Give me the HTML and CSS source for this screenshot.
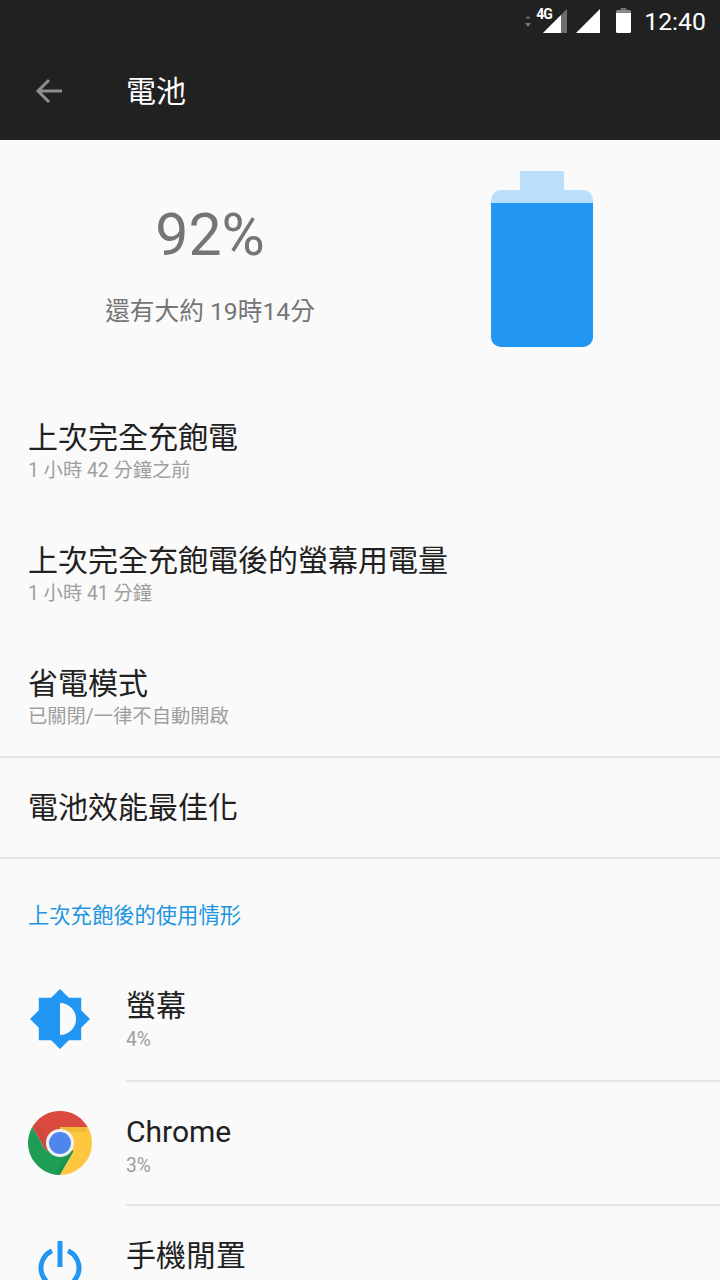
FILE: index.html
```html
<!DOCTYPE html>
<html lang="zh-Hant">
<head>
<meta charset="utf-8">
<title>電池</title>
<link rel="stylesheet" href="styles.css">
</head>
<body>
<div class="phone">
  <header class="appbar">
    <div class="status">
      <svg class="ic-updown" viewBox="0 0 8 14" width="8" height="14"><path d="M4 1 7 5H1z" fill="#555"/><path d="M4 13 1 9h6z" fill="#777"/></svg>
      <div class="sig4g">
        <span class="tag4g">4G</span>
        <svg viewBox="0 0 24 24" width="24" height="24"><path d="M24 0v24H0z" fill="#6e6e6e"/><path d="M18 6v18H0z" fill="#fff"/></svg>
      </div>
      <svg class="ic-sig" viewBox="0 0 24 24" width="24" height="24"><path d="M24 0v24H0z" fill="#fff"/></svg>
      <svg class="ic-bat" viewBox="0 0 15 25" width="15" height="25"><path d="M4.500 0h6v3h-6z" fill="#6e6e6e"/><path d="M1.500 2h12A1.500 1.500 0 0 1 15 3.500V5H0V3.500A1.500 1.500 0 0 1 1.500 2z" fill="#8a8a8a"/><path d="M0 5h15v18.500a1.500 1.500 0 0 1-1.500 1.500h-12A1.500 1.500 0 0 1 0 23.500z" fill="#fff"/></svg>
      <span class="clock">12:40</span>
    </div>
    <div class="toolbar">
      <svg class="back" viewBox="0 0 30 30" width="30" height="30"><path d="M28 15H4M15 4 4 15l11 11" fill="none" stroke="#8e8e8e" stroke-width="3"/></svg>
      <h1 class="title">電池</h1>
    </div>
  </header>
  <section class="hero">
    <div class="hero-text">
      <div class="percent">92%</div>
      <div class="remain">還有大約 19時14分</div>
    </div>
    <div class="battery">
      <div class="cap"></div>
      <div class="body"><div class="fill"></div></div>
    </div>
  </section>
  <section class="group">
    <div class="row"><div class="t">上次完全充飽電</div><div class="s">1 小時 42 分鐘之前</div></div>
    <div class="row"><div class="t">上次完全充飽電後的螢幕用電量</div><div class="s">1 小時 41 分鐘</div></div>
    <div class="row"><div class="t">省電模式</div><div class="s">已關閉/一律不自動開啟</div></div>
  </section>
  <div class="single"><div class="t">電池效能最佳化</div></div>
  <div class="section-label">上次充飽後的使用情形</div>
  <section class="apps">
    <div class="app">
      <div class="app-ic">
        <svg class="ic-bright" viewBox="0 0 60 60" width="60" height="60"><path d="M30 0l8.800 8.800H51.200V21.200L60 30l-8.800 8.800V51.200H38.800L30 60l-8.800-8.800H8.800V38.800L0 30l8.800-8.800V8.800H21.200z" fill="#2196f3"/><path d="M30 14a16 16 0 0 1 0 32z" fill="#fafafa"/></svg>
      </div>
      <div class="app-text"><div class="t">螢幕</div><div class="s">4%</div></div>
    </div>
    <div class="app">
      <div class="app-ic">
        <svg viewBox="0 0 64 64" width="64" height="64">
          <path d="M59.700 16A32 32 0 0 0 4.300 16L18.140 40 32 32V16z" fill="#db4a3e"/>
          <path d="M4.300 16A32 32 0 0 0 32 64L45.860 40 32 32 18.140 40z" fill="#1f9d57"/>
          <path d="M32 64A32 32 0 0 0 59.700 16H32V32L45.860 40z" fill="#fec73f"/>
          <path d="M4.300 16 18.140 40 22 34 9 10z" fill="#8a3a2c" opacity=".15"/>
          <path d="M32 64 45.860 40 40 41 27 64z" fill="#0c5c30" opacity=".15"/>
          <path d="M59.700 16H32L36 21H57z" fill="#b0701c" opacity=".15"/>
          <circle cx="32" cy="32" r="14" fill="#f1f1f1"/>
          <circle cx="32" cy="32" r="11" fill="#4e86ed"/>
        </svg>
      </div>
      <div class="app-text"><div class="t">Chrome</div><div class="s">3%</div></div>
    </div>
    <div class="app">
      <div class="app-ic">
        <svg class="ic-power" viewBox="0 0 44 60" width="44" height="60"><path d="M14 9.800a19 19 0 1 0 16 0M22 0v26" fill="none" stroke="#2196f3" stroke-width="5"/></svg>
      </div>
      <div class="app-text"><div class="t">手機閒置</div></div>
    </div>
  </section>
</div>
</body>
</html>
```
FILE: styles.css
```css
* { box-sizing: border-box; }
html, body { margin: 0; padding: 0; }
body {
  background: #fafafa;
  font-family: Roboto, "Noto Sans CJK TC", sans-serif;
}
.phone { width: 720px; height: 1280px; overflow: hidden; background: #fafafa; }
.appbar { height: 140px; background: #212121; color: #fff; }
.status { height: 48px; padding: 6px 14px 0 0; display: flex; align-items: flex-start; justify-content: flex-end; }
.ic-updown { margin: 8px 11px 0 0; }
.sig4g { position: relative; width: 24px; height: 24px; margin: 3px 0 0 0; }
.sig4g svg { display: block; }
.tag4g { position: absolute; left: -7px; top: -2px; font: 700 14px/14px Roboto, sans-serif; letter-spacing: -1px; color: #fff; z-index: 1; }
.ic-sig { margin: 3px 0 0 9px; }
.ic-bat { margin: 2px 0 0 16px; }
.clock { margin-left: 13px; font-size: 24.800px; line-height: 32px; color: #fff; }
.toolbar { height: 92px; display: flex; align-items: center; padding-left: 34px; padding-bottom: 6px; }
.back { display: block; }
.title { margin: 2px 0 0 62px; font-size: 30px; font-weight: 400; line-height: 40px; color: #fff; }
.hero { height: 236px; display: flex; align-items: flex-start; padding-top: 31px; }
.hero-text { width: 420px; text-align: center; padding-top: 29px; }
.percent { font-size: 59px; line-height: 70px; color: #757575; }
.remain { margin-top: 27px; font-size: 24.700px; line-height: 30px; color: #757575; }
.battery { margin-left: 71px; width: 102px; }
.cap { width: 44px; height: 19px; margin: 0 auto; background: #bbdefb; }
.body { height: 157px; background: #bbdefb; border-radius: 10px; overflow: hidden; padding-top: 13px; }
.fill { height: 144px; background: #2196f3; }
.t { font-size: 30px; line-height: 40px; color: #212121; }
.s { font-size: 19.300px; line-height: 26px; color: #9e9e9e; }
.group { border-bottom: 2px solid #e6e6e6; height: 382px; }
.row { height: 123px; padding: 42px 28px 0; }
.single { height: 101px; padding: 30px 28px 0; border-bottom: 2px solid #e6e6e6; }
.section-label { height: 97px; padding: 42px 28px 0; font-size: 21.300px; line-height: 30px; color: #2196e0; }
.apps { display: block; }
.app { height: 124px; display: flex; }
.app-ic { width: 126px; padding-left: 28px; padding-top: 31px; flex: none; }
.app-ic svg { display: block; }
.ic-bright { margin: 2px 0 0 2px; }
.ic-power { margin: 6px 0 0 10px; }
.app-text { flex: 1; padding-top: 30px; }
.app-text .s { margin-top: 1px; }
.app + .app .app-text { border-top: 2px solid #e6e6e6; }
```
